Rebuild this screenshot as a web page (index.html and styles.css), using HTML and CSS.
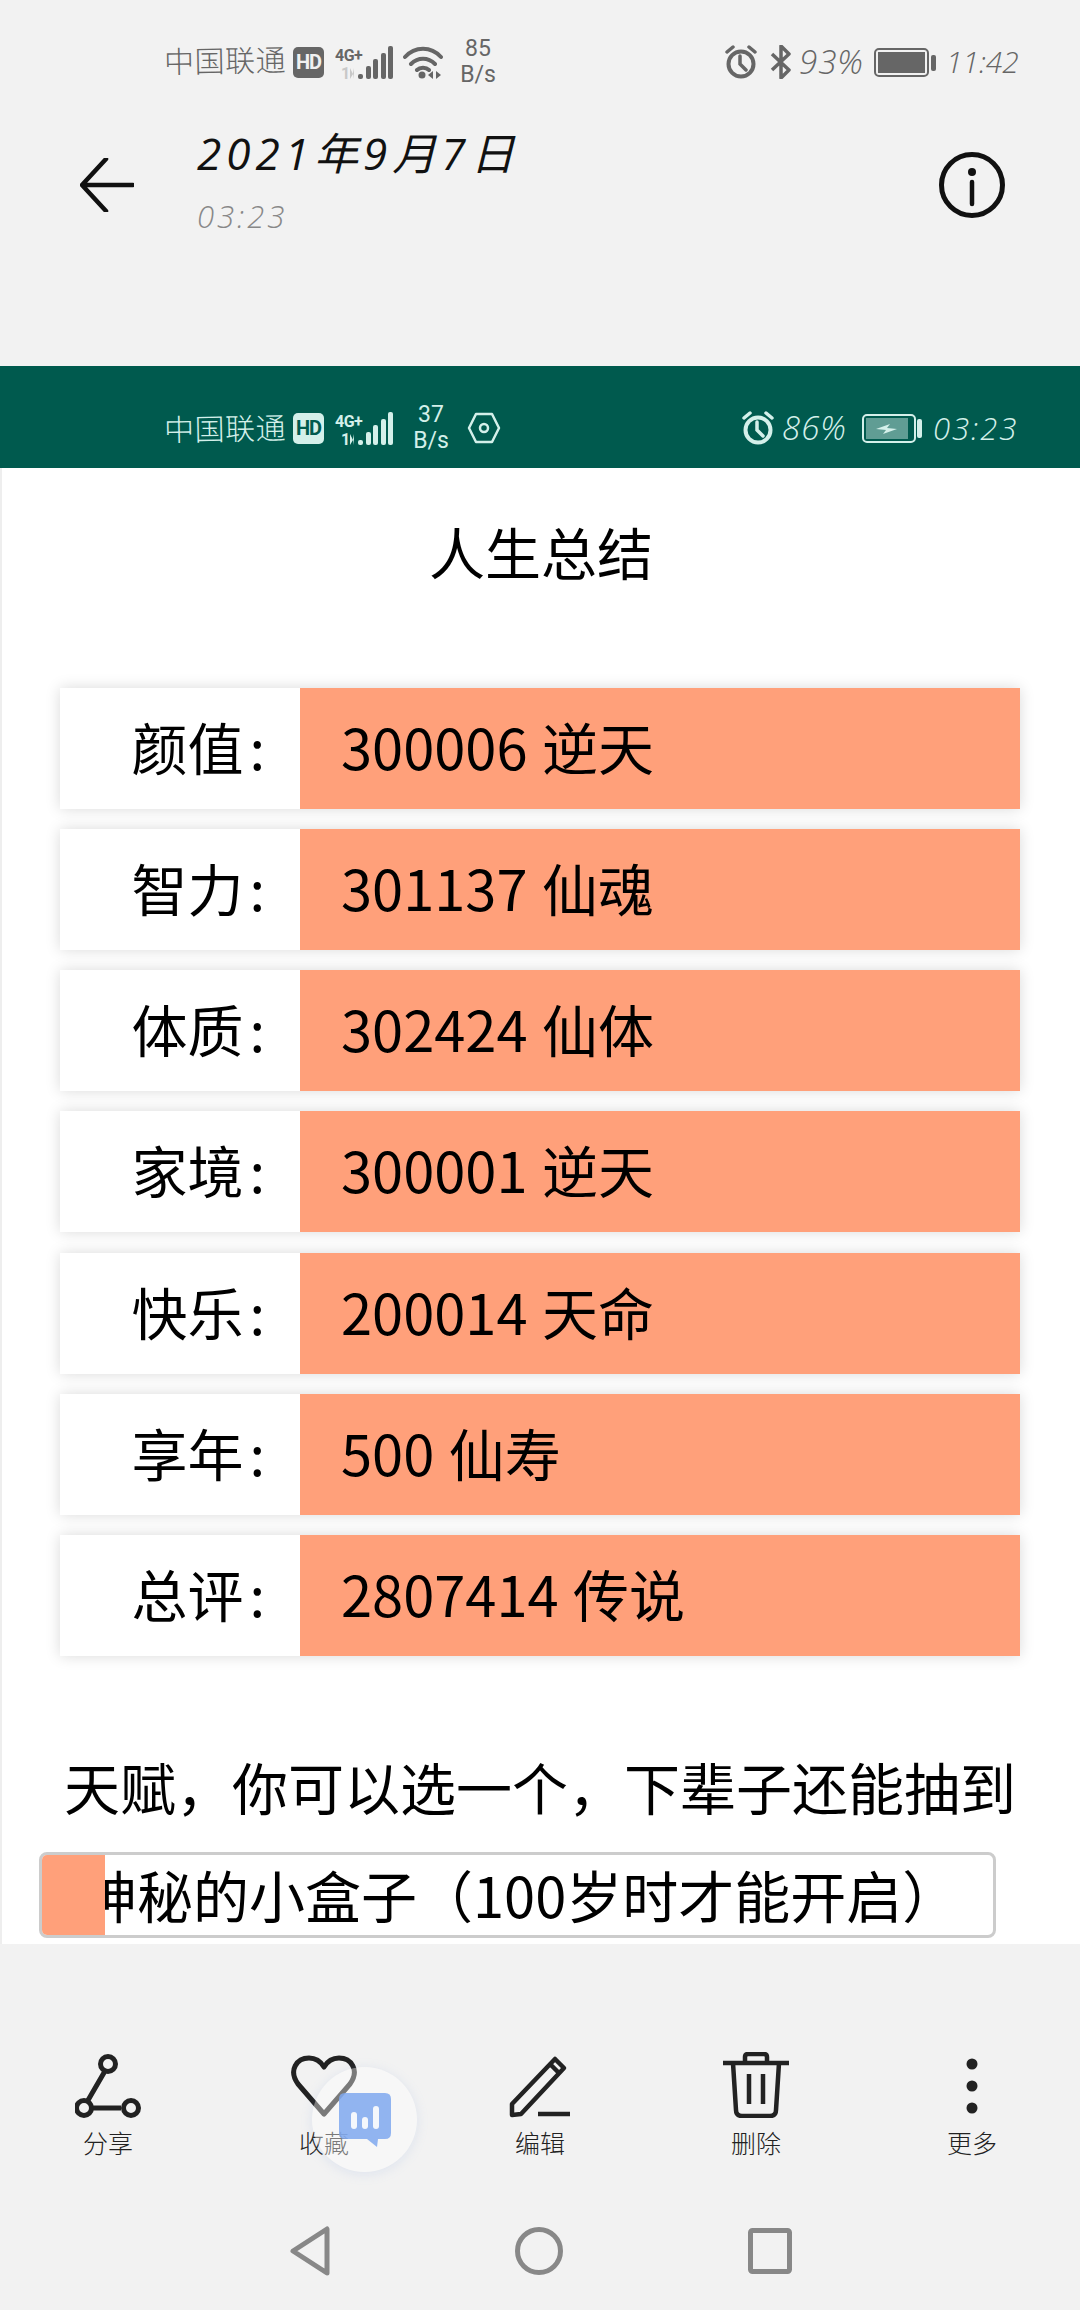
FILE: index.html
```html
<!DOCTYPE html>
<html lang="zh-CN">
<head>
<meta charset="utf-8">
<title>2021年9月7日</title>
<link rel="stylesheet" href="styles.css">
</head>
<body>
<div class="screen">
  <header class="top">
    <div class="status status-light">
      <div class="status-group">
        <span class="carrier">中国联通</span>
        <span class="hd">HD</span>
        <svg class="signal" viewBox="0 0 58 33"><text x="0" y="15" class="net">4G+</text><text x="6" y="33" class="net faint">1</text><path class="faint-fill" d="M15 22v11l3-5zM19 33V22l-1 5z"/><rect x="23" y="28" width="5" height="5" rx="2"/><rect x="31" y="20" width="5" height="13" rx="2"/><rect x="38" y="13" width="5" height="20" rx="2"/><rect x="46" y="7" width="5" height="26" rx="2"/><rect x="53" y="0" width="5" height="33" rx="2"/></svg>
        <svg class="wifi" viewBox="0 0 40 33"><path d="M2 11C12 0 28 0 38 11M8 18c7-7 17-7 24 0M14 24c3-3 9-3 12 0" fill="none" stroke="currentColor" stroke-width="4" stroke-linecap="round"/><circle cx="19" cy="29" r="3.500"/><path d="M30 25v8l-5-4zM33 33v-8l5 4z"/></svg>
        <span class="speed speed-a"><span>85</span><span>B/s</span></span>
      </div>
      <div class="status-group right-a">
        <svg class="alarm" viewBox="0 0 32 34"><circle cx="16" cy="19" r="12.5" fill="none" stroke="currentColor" stroke-width="4"/><path d="M2 7l6-5M30 7l-6-5M15 11v8l6 6" fill="none" stroke="currentColor" stroke-width="3.5" stroke-linecap="round"/></svg>
        <svg class="bt" viewBox="0 0 21 34"><path d="M2 9l17 16-8 8V1l8 8L2 25" fill="none" stroke="currentColor" stroke-width="3.5" stroke-linejoin="round"/></svg>
        <span class="hand pct-a">93%</span>
        <svg class="battery" viewBox="0 0 62 29"><rect x="1" y="1" width="53" height="27" rx="4" fill="none" stroke="currentColor" stroke-width="2"/><rect x="4" y="4" width="47" height="21"/><rect x="57" y="7" width="5" height="16" rx="2"/></svg>
        <span class="hand time-a">11:42</span>
      </div>
    </div>
    <div class="appbar">
      <svg class="back" viewBox="0 0 54 54"><path d="M26 1L2 27l24 26M3 27h50" fill="none" stroke="#111" stroke-width="4.5" stroke-linecap="round" stroke-linejoin="round"/></svg>
      <div class="heading">
        <div class="date">2021年9月7日</div>
        <div class="clock">03:23</div>
      </div>
      <svg class="info" viewBox="0 0 66 66"><circle cx="33" cy="33" r="30.5" fill="none" stroke="#111" stroke-width="5"/><circle cx="33" cy="20" r="4" fill="#111"/><path d="M33 30v22" stroke="#111" stroke-width="4.5" stroke-linecap="round"/></svg>
    </div>
  </header>

  <div class="status status-dark">
    <div class="status-group">
      <span class="carrier">中国联通</span>
      <span class="hd">HD</span>
      <svg class="signal" viewBox="0 0 58 33"><text x="0" y="15" class="net">4G+</text><text x="6" y="33" class="net">1</text><path d="M15 22v11l3-5zM19 33V22l-1 5z"/><rect x="23" y="28" width="5" height="5" rx="2"/><rect x="31" y="20" width="5" height="13" rx="2"/><rect x="38" y="13" width="5" height="20" rx="2"/><rect x="46" y="7" width="5" height="26" rx="2"/><rect x="53" y="0" width="5" height="33" rx="2"/></svg>
      <span class="speed speed-b"><span>37</span><span>B/s</span></span>
      <svg class="hex" viewBox="0 0 34 32"><path d="M9 2h16l7 14-7 14H9L2 16z" fill="none" stroke="currentColor" stroke-width="2.5" stroke-linejoin="round"/><circle cx="17" cy="16" r="4" fill="none" stroke="currentColor" stroke-width="2.5"/></svg>
    </div>
    <div class="status-group right-b">
      <svg class="alarm" viewBox="0 0 32 34"><circle cx="16" cy="19" r="12.5" fill="none" stroke="currentColor" stroke-width="4"/><path d="M2 7l6-5M30 7l-6-5M15 11v8l6 6" fill="none" stroke="currentColor" stroke-width="3.5" stroke-linecap="round"/></svg>
      <span class="hand pct-b">86%</span>
      <svg class="battery-b" viewBox="0 0 60 29"><rect x="1" y="1" width="52" height="27" rx="4" fill="none" stroke="currentColor" stroke-width="2"/><rect x="4" y="4" width="42" height="21" opacity=".45"/><path d="M14 15l14-5-3 4 10 1-14 5 3-4z"/><rect x="55" y="5" width="5" height="19" rx="2"/></svg>
      <span class="hand time-b">03:23</span>
    </div>
  </div>

  <main class="page">
    <h1 class="title">人生总结</h1>
    <div class="rows">
      <div class="row"><div class="key">颜值<span class="colon">:</span></div><div class="val">300006 逆天</div></div>
      <div class="row"><div class="key">智力<span class="colon">:</span></div><div class="val">301137 仙魂</div></div>
      <div class="row"><div class="key">体质<span class="colon">:</span></div><div class="val">302424 仙体</div></div>
      <div class="row"><div class="key">家境<span class="colon">:</span></div><div class="val">300001 逆天</div></div>
      <div class="row"><div class="key">快乐<span class="colon">:</span></div><div class="val">200014 天命</div></div>
      <div class="row"><div class="key">享年<span class="colon">:</span></div><div class="val">500 仙寿</div></div>
      <div class="row"><div class="key">总评<span class="colon">:</span></div><div class="val">2807414 传说</div></div>
    </div>
    <p class="talent">天赋，你可以选一个，下辈子还能抽到</p>
    <div class="choice">
      <div class="mark"></div>
      <div class="choice-clip"><span class="choice-text">神秘的小盒子（100岁时才能开启）</span></div>
    </div>
  </main>

  <footer class="bottom">
    <nav class="tools">
      <div class="tool">
        <svg class="tool-icon" viewBox="0 0 66 66"><path d="M30 19L12 50M17 56h29" stroke="#222" stroke-width="5" fill="none"/><circle cx="33" cy="12" r="7.5" fill="none" stroke="#222" stroke-width="5"/><circle cx="9" cy="56" r="7.5" fill="none" stroke="#222" stroke-width="5"/><circle cx="56" cy="56" r="7.5" fill="none" stroke="#222" stroke-width="5"/></svg>
        <span class="tool-label">分享</span>
      </div>
      <div class="tool">
        <svg class="tool-icon" viewBox="0 0 66 66"><path d="M33 62L7 32C-3 18 6 6 18 6c7 0 12 4 15 9 3-5 8-9 15-9 12 0 21 12 11 26z" fill="none" stroke="#222" stroke-width="5" stroke-linejoin="round"/></svg>
        <span class="tool-label">收藏</span>
      </div>
      <div class="tool">
        <svg class="tool-icon" viewBox="0 0 66 66"><path d="M5 63V52L48 7l9 9-43 46zM43 12l9 9M31 62h32" fill="none" stroke="#222" stroke-width="4.5" stroke-linejoin="round"/></svg>
        <span class="tool-label">编辑</span>
      </div>
      <div class="tool">
        <svg class="tool-icon" viewBox="0 0 66 66"><path d="M0 11h66M22 10V5q0-3 3-3h16q3 0 3 3v5M10 11l3 47q0 6 6 6h28q6 0 6-6l3-47M26 22v30M40 22v30" fill="none" stroke="#222" stroke-width="4.5"/></svg>
        <span class="tool-label">删除</span>
      </div>
      <div class="tool">
        <svg class="tool-icon" viewBox="0 0 66 66"><circle cx="33" cy="12" r="5.5" fill="#222"/><circle cx="33" cy="34" r="5.5" fill="#222"/><circle cx="33" cy="56" r="5.5" fill="#222"/></svg>
        <span class="tool-label">更多</span>
      </div>
    </nav>
    <nav class="navbar">
      <svg class="nav-back" viewBox="0 0 40 50"><path d="M37 3v44L3 25z" fill="none" stroke="#888" stroke-width="5" stroke-linejoin="round"/></svg>
      <svg class="nav-home" viewBox="0 0 48 48"><circle cx="24" cy="24" r="21.5" fill="none" stroke="#888" stroke-width="5"/></svg>
      <svg class="nav-recent" viewBox="0 0 44 46"><rect x="2.5" y="2.500" width="39" height="41" rx="2" fill="none" stroke="#888" stroke-width="5"/></svg>
    </nav>
  </footer>

  <div class="floater">
    <svg class="floater-icon" viewBox="0 0 52 54"><path d="M6 0h40q6 0 6 6v34q0 6-6 6h-7l-1 8-10-8H6q-6 0-6-6V6q0-6 6-6z" fill="#7fa8ee" opacity=".85"/><rect x="12" y="19" width="6" height="17" rx="3" fill="#f4f7fc"/><rect x="23" y="24" width="6" height="12" rx="3" fill="#f4f7fc"/><rect x="34" y="13" width="6" height="23" rx="3" fill="#f4f7fc"/></svg>
  </div>
</div>
</body>
</html>
```
FILE: styles.css
```css
* { box-sizing: border-box; }
html, body { margin: 0; padding: 0; }
body { background: #f1f1f1; font-family: "Noto Sans CJK SC", "Noto Sans", sans-serif; }
.screen { position: relative; width: 1080px; height: 2310px; overflow: hidden; background: #f2f2f2; display: flex; flex-direction: column; }

.top { height: 366px; padding-top: 32px; }
.status { display: flex; justify-content: space-between; align-items: center; height: 60px; padding: 0 62px 0 164px; }
.status-light { color: #666; --hd-ink: #f1f1f1; }
.status-dark { color: #d4f0ea; background: #005a4e; height: 102px; padding-top: 22px; --hd-ink: #005a4e; }
.status-group { display: flex; align-items: center; height: 60px; }
.carrier { width: 122px; margin-bottom: 6px; font-size: 30px; line-height: 36px; letter-spacing: 0.5px; white-space: nowrap; font-weight: 300; transform: rotate(-1deg); }
.status-dark .carrier { margin-bottom: 3px; }
.hd { position: relative; width: 31px; height: 31px; margin-left: 7px; background: currentColor; border-radius: 5px; display: flex; align-items: center; justify-content: center; font: 700 20px "Roboto", sans-serif; letter-spacing: -1px; -webkit-text-fill-color: var(--hd-ink); }
.signal { width: 58px; height: 33px; margin-left: 11px; fill: currentColor; overflow: visible; }
.net { font: 700 16px "Roboto", sans-serif; letter-spacing: -.5px; }
.faint, .faint-fill { fill: #c8c8c8; }
.wifi { width: 40px; height: 33px; margin-left: 10px; fill: currentColor; }
.speed { display: flex; flex-direction: column; align-items: center; font: 400 23px/26px "Roboto", sans-serif; }
.speed-a { margin-left: 15px; width: 40px; }
.speed-b { margin-left: 18px; width: 40px; }
.hex { width: 34px; height: 32px; margin-left: 16px; }
.alarm { width: 32px; height: 34px; }
.bt { width: 21px; height: 34px; margin-left: 13px; }
.hand { font-family: "Open Sans", sans-serif; font-weight: 300; font-style: italic; font-size: 33px; line-height: 40px; white-space: nowrap; }
.pct-a { width: 62px; margin-left: 8px; letter-spacing: 1px; }
.battery { width: 62px; height: 29px; margin-left: 13px; fill: currentColor; }
.time-a { width: 72px; margin-left: 10px; font-size: 30px; letter-spacing: 0; }
.pct-b { width: 66px; margin-left: 8px; letter-spacing: 1px; }
.battery-b { width: 60px; height: 29px; margin-left: 14px; fill: currentColor; }
.time-b { width: 85px; margin-left: 11px; font-size: 31px; letter-spacing: 2px; }

.appbar { height: 186px; padding: 0 75px 0 80px; display: flex; align-items: center; }
.back { width: 54px; height: 54px; flex: none; }
.heading { flex: 1; margin-left: 63px; margin-top: -14px; }
.date { font-family: "Open Sans", "Noto Sans CJK SC", sans-serif; font-style: italic; font-size: 44px; line-height: 60px; color: #111; letter-spacing: 5px; white-space: nowrap; }
.clock { font-family: "Open Sans", sans-serif; font-style: italic; font-weight: 300; font-size: 31px; line-height: 36px; margin-top: 15px; color: #888; letter-spacing: 3px; }
.info { width: 66px; height: 66px; flex: none; }

.page { height: 1476px; background: #fff; border-left: 2px solid #eeeeee; overflow: hidden; color: #000; }
.title { margin: 0; height: 174px; line-height: 166px; font-size: 56px; font-weight: 400; text-align: center; }
.rows { margin: 46px 60px 0 58px; display: grid; gap: 20.17px; }
.row { height: 121px; display: flex; box-shadow: 0 0 14px rgba(0, 0, 0, .15); font-size: 56px; line-height: 115px; }
.key { width: 240px; background: #fff; text-align: right; padding-right: 35px; }
.colon { margin-left: 6px; }
.val { flex: 1; background: #ffa07a; padding-left: 41px; white-space: nowrap; word-spacing: 2px; }
.talent { margin: 90px 0 0 62px; font-size: 56px; line-height: 80px; white-space: nowrap; }
.choice { margin: 26px 0 0 37px; width: 957px; height: 86px; display: flex; border: 3px solid #ccc; border-radius: 8px; overflow: hidden; font-size: 56px; }
.mark { width: 66px; background: #ffa07a; flex: none; margin: -3px 0 -3px -3px; }
.choice-clip { flex: 1; overflow: hidden; line-height: 78px; white-space: nowrap; }
.choice-text { display: block; margin-left: -24px; }

.bottom { flex: 1; }
.tools { display: grid; grid-template-columns: repeat(5, 216px); padding-top: 108px; }
.tool { display: flex; flex-direction: column; align-items: center; }
.tool-icon { width: 66px; height: 66px; }
.tool-label { margin-top: 7px; font-size: 25px; line-height: 34px; color: #222; font-weight: 300; }
.navbar { display: flex; justify-content: center; align-items: center; gap: 185px; margin-top: 67px; padding-left: 1px; }
.nav-back { width: 40px; height: 50px; }
.nav-home { width: 48px; height: 48px; }
.nav-recent { width: 44px; height: 46px; }

.floater { position: absolute; left: 312px; top: 2067px; width: 105px; height: 105px; border-radius: 50%; background: rgba(255, 255, 255, .4); box-shadow: 0 2px 12px rgba(130, 160, 220, .18); }
.floater-icon { position: absolute; left: 27px; top: 26px; width: 52px; height: 54px; }
```
